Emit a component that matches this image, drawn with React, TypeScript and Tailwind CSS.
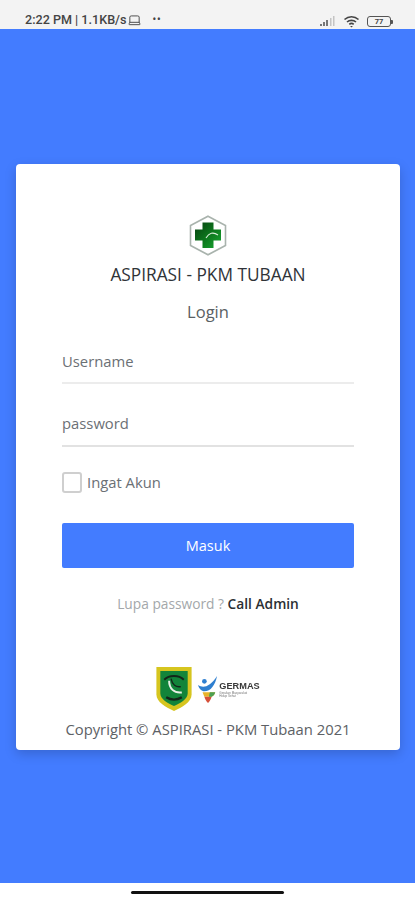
import { Laptop } from "lucide-react";

function StatusBar() {
  return (
    <div className="flex h-[29px] items-end justify-between bg-[#f3f3f3] pb-[1px] pl-[25px] pr-[22px] font-['Roboto',sans-serif] text-[#444]">
      <div className="flex items-center">
        <span className="whitespace-nowrap text-[12.6px] font-medium leading-[16px]">2:22 PM | 1.1KB/s</span>
        <Laptop className="ml-[1px] h-[14px] w-[15px]" strokeWidth={1.6} />
        <span className="ml-[10px] text-[10px] font-bold leading-[16px] tracking-[1px]">••</span>
      </div>
      <div className="flex items-center gap-[7px]">
        <svg width="16" height="11" viewBox="0 0 16 11">
          <rect x="0" y="8" width="2" height="2" fill="#777" />
          <rect x="3" y="6" width="2" height="4" fill="#777" />
          <rect x="6" y="4" width="2" height="6" fill="#777" />
          <rect x="10" y="2" width="1.5" height="8" fill="#c4c4c4" />
          <rect x="13" y="0" width="1.5" height="10" fill="#c4c4c4" />
        </svg>
        <svg width="17" height="13" viewBox="0 0 16 13" fill="none" stroke="#444" strokeWidth="1.6">
          <path d="M1 4.5C5 .8 11 .8 15 4.5" />
          <path d="M3.5 7C6 4.8 10 4.8 12.5 7" />
          <path d="M5.8 9.3C7 8.2 9 8.2 10.2 9.3" />
          <path d="M8 12.5l-1.4-1.6h2.8z" fill="#444" stroke="none" />
        </svg>
        <div className="flex items-center">
          <div className="flex h-[11px] w-[24px] items-center justify-center rounded-[3px] border border-[#555] text-[7.5px] font-bold leading-none">
            77
          </div>
          <div className="h-[4px] w-[2px] rounded-r-[1px] bg-[#555]" />
        </div>
      </div>
    </div>
  );
}

function PuskesmasLogo() {
  return (
    <svg width="38" height="41" viewBox="0 0 38 41" className="blur-[0.3px]">
      <defs>
        <linearGradient id="cross" x1="0" y1="0" x2="1" y2="1">
          <stop offset="0" stopColor="#063f10" />
          <stop offset="0.55" stopColor="#0d7a1e" />
          <stop offset="1" stopColor="#19a832" />
        </linearGradient>
      </defs>
      <path d="M19 1.2L36.5 10.6V30.4L19 39.8L1.5 30.4V10.6Z" fill="#fff" stroke="#a9b3ad" strokeWidth="1.6" />
      <path d="M13.5 7.5H24.5V14.5H32V25.5H24.5V33H13.5V25.5H6V14.5H13.5Z" fill="url(#cross)" />
      <path d="M17 23C20 18 24 16.5 29 20" fill="none" stroke="#d8ecd8" strokeWidth="1.1" />
    </svg>
  );
}

function DistrictCrest() {
  return (
    <svg width="36" height="44" viewBox="0 0 36 45" className="blur-[0.5px]">
      <path d="M0 0H36V28C36 36 26 41 18 45C10 41 0 36 0 28Z" fill="#d6c51f" />
      <path d="M4 4H32V27C32 33 24 37 18 40C12 37 4 33 4 27Z" fill="#12843a" />
      <path d="M8 13C13 8 23 8 28 13" fill="none" stroke="#14261a" strokeWidth="2" />
      <path d="M13 14C13 22 18 27 26 26" fill="none" stroke="#e8efe6" strokeWidth="2" />
      <path d="M15 12C16 18 20 21 25 20" fill="none" stroke="#14261a" strokeWidth="1.4" />
      <path d="M10 31C15 34 21 34 26 31" fill="none" stroke="#14261a" strokeWidth="2.4" />
    </svg>
  );
}

function GermasLogo() {
  return (
    <div className="flex items-center blur-[0.4px]">
      <svg width="22" height="29" viewBox="0 0 24 32">
        <path d="M1 11C7 15 14 13 22 1C20 11 15 18 8 18C5 18 2 15 1 11Z" fill="#2f7fd0" />
        <circle cx="8" cy="7" r="2.6" fill="#2f7fd0" />
        <path d="M6 19H20C19 22 18 23 16 24H8Z" fill="#e8b22a" />
        <path d="M8 24H16C15 27 14 29 12 31C10 29 9 27 8 24Z" fill="#d6503a" />
        <path d="M14 19H20C19 22 18 23 16 24H13Z" fill="#4da052" />
      </svg>
      <div className="flex flex-col font-['Liberation_Sans',sans-serif]">
        <span className="text-[9.2px] font-bold leading-[10px] text-[#3a3a3a]">GERMAS</span>
        <span className="whitespace-nowrap text-[3px] leading-[4px] text-[#777]">Gerakan Masyarakat</span>
        <span className="whitespace-nowrap text-[3px] leading-[3px] text-[#777]">Hidup Sehat</span>
      </div>
    </div>
  );
}

export default function App() {
  return (
    <div className="flex h-[900px] w-[415px] flex-col overflow-hidden bg-white font-['Open_Sans',sans-serif]">
      <StatusBar />
      <main className="flex h-[854px] flex-col bg-[#437cff] pl-4 pr-[15px] pt-[135px]">
        <div className="flex h-[586px] flex-col items-center rounded-[4px] bg-white px-[46px] pt-[51px] shadow-[0_4px_12px_rgba(0,0,0,0.18)]">
          <PuskesmasLogo />
          <h1 className="mt-[7px] whitespace-nowrap text-[17.3px] font-normal leading-[24px] text-[#2f3338]">
            ASPIRASI - PKM TUBAAN
          </h1>
          <h2 className="mt-[12px] text-[16.5px] font-normal leading-[25px] text-[#5a5f64]">Login</h2>

          <div className="mt-[15px] h-[45px] w-full border-b-2 border-[#ececec] pt-[11px] text-[14.8px] leading-[22px] text-[#6b7075]">
            Username
          </div>
          <div className="mt-[16px] h-[47px] w-full border-b-2 border-[#e2e2e2] pt-[12px] text-[14.8px] leading-[22px] text-[#6b7075]">
            password
          </div>

          <label className="mt-[24px] flex w-full items-center">
            <span className="h-[21px] w-[20px] rounded-[3px] border-2 border-[#cfcfcf] bg-white" />
            <span className="ml-[5px] text-[14.8px] leading-[22px] text-[#6b7075]">Ingat Akun</span>
          </label>

          <button className="mt-[30px] h-[45px] w-full rounded-[2px] bg-[#437cff] text-[14.5px] leading-[22px] text-white">
            Masuk
          </button>

          <p className="mt-[26px] whitespace-nowrap text-[13.75px] leading-[20px] text-[#a3a7aa]">
            Lupa password ? <span className="font-semibold text-[#2b2f33]">Call Admin</span>
          </p>

          <div className="mt-[53px] flex items-center gap-[5px]">
            <DistrictCrest />
            <GermasLogo />
          </div>

          <p className="mt-[7px] whitespace-nowrap text-[14.8px] leading-[22px] text-[#5d6165]">
            Copyright © ASPIRASI - PKM Tubaan 2021
          </p>
        </div>
      </main>
      <div className="flex flex-1 justify-center pt-[8px]">
        <div className="h-[3px] w-[153px] rounded-full bg-[#111]" />
      </div>
    </div>
  );
}
